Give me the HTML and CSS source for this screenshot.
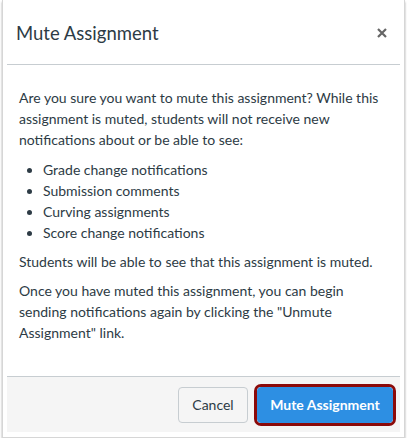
FILE: index.html
```html
<!DOCTYPE html>
<html>
<head>
<meta charset="utf-8">
<link rel="stylesheet" href="styles.css">
</head>
<body>
<div class="frame">
  <div class="dialog">
    <header class="header">
      <h1 class="title">Mute Assignment</h1>
      <span class="close" aria-label="Close">
        <svg width="10" height="10" viewBox="0 0 10 10"><path d="M1 1L9 9M9 1L1 9" stroke="#666" stroke-width="2.2" stroke-linecap="butt"/></svg>
      </span>
    </header>
    <div class="body">
      <p class="p">Are you sure you want to mute this assignment? While this assignment is muted, students will not receive new notifications about or be able to see:</p>
      <ul class="list">
        <li>Grade change notifications</li>
        <li>Submission comments</li>
        <li>Curving assignments</li>
        <li>Score change notifications</li>
      </ul>
      <p class="p">Students will be able to see that this assignment is muted.</p>
      <p class="p">Once you have muted this assignment, you can begin sending notifications again by clicking the "Unmute Assignment" link.</p>
    </div>
    <footer class="footer">
      <button class="btn btn-cancel">Cancel</button>
      <span class="focus-ring"><button class="btn btn-primary">Mute Assignment</button></span>
    </footer>
  </div>
</div>
</body>
</html>
```
FILE: styles.css
```css
html, body {
  margin: 0;
  padding: 0;
  background: #ffffff;
}
body {
  font-family: Lato, "Liberation Sans", sans-serif;
  color: #2d3b45;
}
.frame {
  width: 403px;
  height: 438px;
  margin-left: 2px;
  box-sizing: border-box;
  border: 1px solid #d6d6d6;
  border-top: none;
  box-shadow: 0 2px 2px rgba(0,0,0,0.35);
  padding: 0 4px 5px 4px;
  background: #fff;
}
.dialog {
  display: flex;
  flex-direction: column;
  height: 100%;
}
.header {
  height: 65px;
  box-sizing: border-box;
  border-bottom: 1px solid #c7cdd1;
  display: flex;
  align-items: center;
  justify-content: space-between;
  padding: 2px 13px 0 9px;
}
.title {
  margin: 0;
  font-size: 18.5px;
  font-weight: 400;
  color: #2d3b45;
}
.close {
  display: flex;
  width: 10px;
  height: 10px;
}
.body {
  flex: 1;
  padding: 22px 12px 0 12px;
  font-size: 14px;
  line-height: 21px;
}
.p {
  margin: 0 0 8px 0;
}
.list {
  margin: 9px 0 8px 0;
  padding-left: 24px;
}
.footer {
  height: 56px;
  box-sizing: border-box;
  background: #f5f5f5;
  border-top: 1px solid #c7cdd1;
  display: flex;
  align-items: center;
  justify-content: flex-end;
  gap: 6px;
  padding: 0 4px 0 0;
}
.btn {
  font-family: Lato, "Liberation Sans", sans-serif;
  font-size: 14px;
  height: 36px;
  border-radius: 4px;
  cursor: pointer;
}
.btn-cancel {
  background: #f5f5f5;
  border: 1px solid #c7cdd1;
  color: #2d3b45;
  width: 70px;
  padding: 0;
}
.focus-ring {
  display: inline-flex;
  border: 3px solid #8b0a0a;
  border-radius: 7px;
  padding: 0;
}
.btn-primary {
  background: #2d8fe3;
  border: 1px solid #2d8fe3;
  color: #fff;
  font-weight: 700;
  width: 136px;
  height: 36px;
  padding: 0;
}
```
